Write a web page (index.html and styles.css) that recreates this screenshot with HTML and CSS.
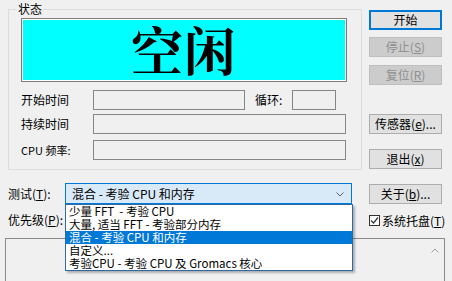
FILE: index.html
```html
<!DOCTYPE html>
<html lang="zh">
<head>
<meta charset="utf-8">
<title>Orthos</title>
<link rel="stylesheet" href="styles.css">
</head>
<body>
<div class="top">
  <div class="group">
    <span class="caption">状态</span>
    <div class="status">空闲</div>
    <div class="row r1">
      <span class="lbl">开始时间</span>
      <div class="field w152"></div>
      <span class="loop">循环:</span>
      <div class="field w44"></div>
    </div>
    <div class="row r2">
      <span class="lbl">持续时间</span>
      <div class="field w253"></div>
    </div>
    <div class="row r3">
      <span class="lbl small">CPU 频率:</span>
      <div class="field w253"></div>
    </div>
  </div>
  <div class="btncol">
    <div class="btn default">开始</div>
    <div class="btn disabled b2">停止(<u>S</u>)</div>
    <div class="btn disabled b3">复位(<u>R</u>)</div>
    <div class="btn b4">传感器(<u>e</u>)...</div>
    <div class="btn b5">退出(<u>x</u>)</div>
  </div>
</div>
<div class="line l1">
  <span class="lbl2">测试(<u>T</u>):</span>
  <div class="combo active">
    <span class="ctext">混合 - 考验 CPU 和内存</span>
    <svg class="chev" width="8" height="5" viewBox="0 0 8 5"><polyline points="0.5,0.5 4,4 7.5,0.5" fill="none" stroke="#606060" stroke-width="1"/></svg>
    <ul class="dropdown">
      <li>少量 FFT&nbsp; - 考验 CPU</li>
      <li>大量, 适当 FFT - 考验部分内存</li>
      <li class="sel">混合 - 考验 CPU 和内存</li>
      <li>自定义...</li>
      <li>考验CPU - 考验 CPU 及 Gromacs 核心</li>
    </ul>
  </div>
  <div class="btn about">关于(<u>b</u>)...</div>
</div>
<div class="line l2">
  <span class="lbl2">优先级(<u>P</u>):</span>
  <div class="combo"></div>
  <label class="check">
    <span class="box"><svg width="9" height="9" viewBox="0 0 9 9"><polyline points="1,4.5 3.5,7 8,1.5" fill="none" stroke="#333" stroke-width="1.2"/></svg></span>
    <span>系统托盘(<u>T</u>)</span>
  </label>
</div>
<div class="log">
  <svg class="up" width="8" height="5" viewBox="0 0 8 5"><polyline points="0.5,4.5 4,1 7.5,4.5" fill="none" stroke="#a0a0a0" stroke-width="1"/></svg>
</div>
</body>
</html>
```
FILE: styles.css
```css
* { box-sizing: border-box; }
html, body { margin: 0; padding: 0; }
body {
  width: 452px;
  height: 281px;
  overflow: hidden;
  background: #f0f0f0;
  color: #000;
  font-family: "Noto Sans CJK SC", "Noto Sans", sans-serif;
  font-size: 12px;
  line-height: 14px;
}
u { text-decoration: underline; text-underline-offset: 1px; }
.top {
  display: flex;
  padding: 9px 0 0 8px;
}
.group {
  position: relative;
  width: 354px;
  height: 161px;
  border: 1px solid #dcdcdc;
  padding: 8px 0 0 12px;
}
.caption {
  position: absolute;
  top: -8px;
  left: 8px;
  padding: 0 1px;
  background: #f0f0f0;
  line-height: 14px;
}
.status {
  width: 326px;
  height: 64px;
  border: 1px solid #7d7d7d;
  box-shadow: inset 0 0 0 1px #ffffff;
  background: #00ffff;
  display: flex;
  align-items: center;
  justify-content: center;
  font-family: "Noto Serif CJK SC", "Noto Sans CJK SC", serif;
  font-weight: 700;
  font-size: 52px;
  line-height: 1;
  padding-bottom: 2px;
  letter-spacing: 1px;
}
.row {
  display: flex;
  align-items: center;
  height: 20px;
}
.r1 { margin-top: 8px; }
.r2 { margin-top: 4px; }
.r3 { margin-top: 6px; }
.lbl { width: 72px; font-size: 12px; }
.lbl.small { font-size: 11px; }
.loop { width: 47px; padding-left: 10px; }
.field {
  height: 20px;
  border: 1px solid #868686;
  background: #f0f0f0;
}
.w152 { width: 152px; }
.w44 { width: 44px; }
.w253 { width: 253px; }
.btncol {
  display: flex;
  flex-direction: column;
  margin-left: 7px;
  padding-top: 1px;
}
.btn {
  width: 73px;
  height: 20px;
  border: 1px solid #adadad;
  background: #e1e1e1;
  display: flex;
  align-items: center;
  justify-content: center;
  line-height: 14px;
  padding-bottom: 1px;
}
.btn.default {
  border: 2px solid #0078d7;
}
.btn.disabled {
  background: #cccccc;
  border-color: #bfbfbf;
  color: #8e8e8e;
}
.b2 { margin-top: 7px; }
.b3 { margin-top: 8px; }
.b4 { margin-top: 29px; }
.b5 { margin-top: 15px; }
.line {
  display: flex;
  align-items: center;
  padding-left: 8px;
}
.l1 { margin-top: 13px; height: 21px; }
.l2 { margin-top: 5px; height: 21px; }
.lbl2 { width: 57px; }
.combo {
  position: relative;
  width: 287px;
  height: 21px;
  border: 1px solid #adadad;
  background: #e1e1e1;
  display: flex;
  align-items: center;
}
.combo.active {
  border-color: #0078d7;
  background: #d8e9f8;
}
.ctext { padding-left: 6px; flex: 1; }
.chev { margin-right: 7px; margin-top: 1px; }
.dropdown {
  position: absolute;
  top: 20px;
  left: -1px;
  width: 288px;
  height: 67px;
  margin: 0;
  padding: 0;
  list-style: none;
  background: #ffffff;
  border: 1px solid #2f6aa6;
  box-shadow: 2px 2px 2px rgba(0, 0, 0, 0.28);
  z-index: 2;
}
.dropdown li {
  height: 13px;
  line-height: 13px;
  font-size: 11.5px;
  padding-left: 3px;
  white-space: nowrap;
}
.dropdown li.sel {
  background: #0078d7;
  color: #ffffff;
}
.about { margin-left: 17px; margin-top: 1px; }
.check {
  display: flex;
  align-items: center;
  margin-left: 17px;
  margin-top: 2px;
  gap: 2px;
}
.check .box {
  width: 11px;
  height: 11px;
  border: 1px solid #333;
  background: #fff;
  display: flex;
  align-items: center;
  justify-content: center;
}
.log {
  margin: 8px 0 0 5px;
  width: 440px;
  height: 44px;
  border: 1px solid #8a8a8a;
  border-bottom: none;
  background: #f0f0f0;
  display: flex;
  justify-content: flex-end;
  padding: 9px 5px 0 0;
}
.up { display: block; }
```
